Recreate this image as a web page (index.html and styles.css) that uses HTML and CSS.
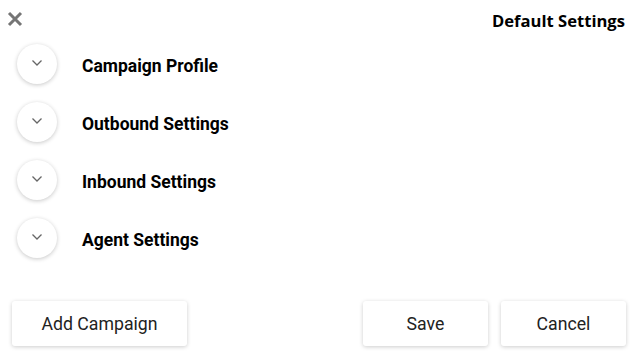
FILE: index.html
```html
<!DOCTYPE html>
<html>
    <head>
        <meta name="viewport" content="width=device-width, initial-scale=1.0">
        <title>Default Settings</title>
        <link rel="stylesheet" href="styles.css">
    </head>
    <body>
        <div class="header">
            <button class="close" aria-label="Close">
                <svg width="16" height="16" viewBox="0 0 16 16">
                    <path d="M2 2 L14 14 M14 2 L2 14" stroke="#757575" stroke-width="3" stroke-linecap="butt"/>
                </svg>
            </button>
            <h1 class="title">Default Settings</h1>
        </div>
        <div class="sections">
            <div class="section">
                <span class="toggle">
                    <svg width="12" height="8" viewBox="0 0 12 8"><path d="M1.5 1.5 L6 6 L10.5 1.5" fill="none" stroke="#666" stroke-width="1.3"/></svg>
                </span>
                <span class="section-name">Campaign Profile</span>
            </div>
            <div class="section">
                <span class="toggle">
                    <svg width="12" height="8" viewBox="0 0 12 8"><path d="M1.5 1.5 L6 6 L10.5 1.5" fill="none" stroke="#666" stroke-width="1.3"/></svg>
                </span>
                <span class="section-name">Outbound Settings</span>
            </div>
            <div class="section">
                <span class="toggle">
                    <svg width="12" height="8" viewBox="0 0 12 8"><path d="M1.5 1.5 L6 6 L10.5 1.5" fill="none" stroke="#666" stroke-width="1.3"/></svg>
                </span>
                <span class="section-name">Inbound Settings</span>
            </div>
            <div class="section">
                <span class="toggle">
                    <svg width="12" height="8" viewBox="0 0 12 8"><path d="M1.5 1.5 L6 6 L10.5 1.5" fill="none" stroke="#666" stroke-width="1.3"/></svg>
                </span>
                <span class="section-name">Agent Settings</span>
            </div>
        </div>
        <div class="footer">
            <button class="btn btn-add">Add Campaign</button>
            <div class="actions">
                <button class="btn">Save</button>
                <button class="btn">Cancel</button>
            </div>
        </div>
    </body>
</html>
```

FILE: styles.css
```css
*{
    padding: 0;
    margin: 0;
    box-sizing: border-box;
}
html { font-family: Roboto, "Liberation Sans", sans-serif; color: #000;}
body { background: #fff; width: 634px; height: 356px; }
.header{
    display: flex;
    justify-content: space-between;
    align-items: flex-start;
    padding: 11px 9px 0 7px;
    height: 44px;
}
.close{
    border: none;
    background: none;
    width: 16px;
    height: 16px;
    display: block;
}
.close svg{ display: block; }
.title{
    font-family: "Open Sans", "Noto Sans", sans-serif;
    font-size: 16.6px;
    font-weight: 700;
    line-height: 20px;
}
.sections{
    padding-left: 17px;
    display: flex;
    flex-direction: column;
    gap: 18px;
}
.section{
    display: flex;
    align-items: center;
    height: 40px;
}
.toggle{
    width: 40px;
    height: 40px;
    border-radius: 50%;
    background: #fff;
    box-shadow: 0 1px 4px rgba(0,0,0,0.22);
    display: flex;
    align-items: center;
    justify-content: center;
    margin-right: 25px;
}
.toggle svg{ display: block; margin-top: -2px; }
.section-name{
    font-size: 17.5px;
    font-weight: 700;
    padding-top: 3px;
}
.footer{
    display: flex;
    justify-content: space-between;
    padding: 0 8px 0 12px;
    margin-top: 43px;
}
.actions{
    display: flex;
    gap: 13px;
}
.btn{
    font-family: Roboto, sans-serif;
    font-size: 17.7px;
    color: #222;
    background: #fff;
    border: none;
    border-radius: 3px;
    box-shadow: 0 1px 4px rgba(0,0,0,0.2);
    height: 45px;
    width: 125px;
}
.btn-add{ width: 175px; }
```
